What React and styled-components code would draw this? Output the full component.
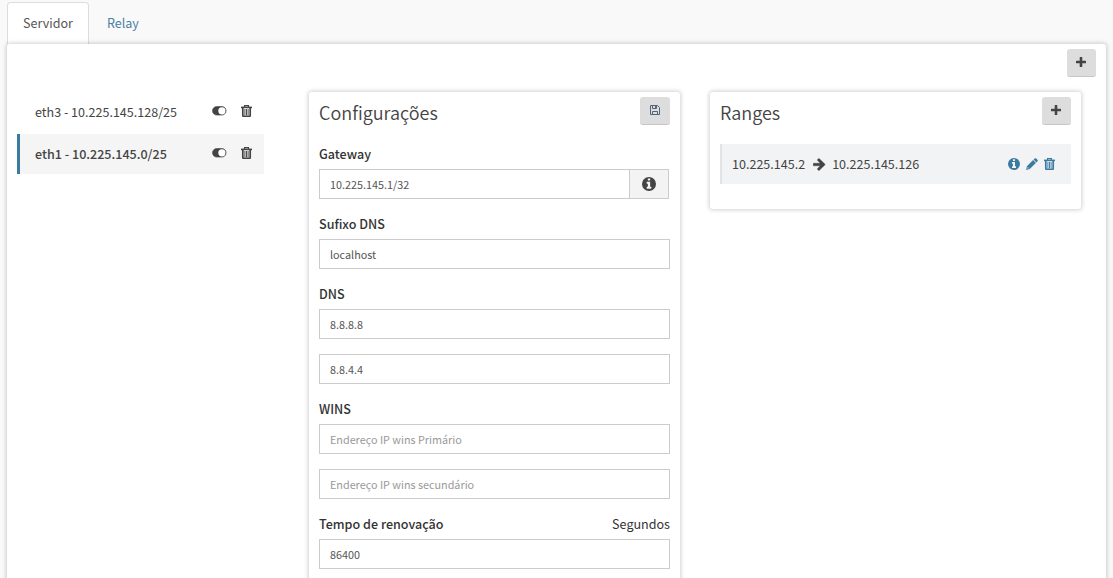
import React from "react";
import styled, { createGlobalStyle, css } from "styled-components";

const Global = createGlobalStyle`
  * { box-sizing: border-box; }
  body {
    margin: 0;
    background: #f9f9f9;
    color: #444;
    font: 12.55px/20px "Noto Sans CJK JP", "Noto Sans", sans-serif;
    height: 578px;
    overflow: hidden;
  }
`;

const Page = styled.main`
  height: 578px;
  padding: 2px 7px 0 7px;
  display: flex;
  flex-direction: column;
  overflow: hidden;
`;

const Tabs = styled.nav`
  display: flex;
  height: 42px;
  flex: none;
`;

const Tab = styled.a`
  height: 42px;
  padding: 10px 15px 0;
  border: 1px solid ${(p) => (p.$active ? "#ddd" : "transparent")};
  border-bottom: 0;
  border-radius: 4px 4px 0 0;
  background: ${(p) => (p.$active ? "#fff" : "transparent")};
  color: ${(p) => (p.$active ? "#555" : "#4a7ea3")};
  margin-right: 2px;
`;

const Panel = styled.section`
  background: #fff;
  border-radius: 3px;
  box-shadow: 0 0 4px 1px rgba(0, 0, 0, 0.18);
`;

const Content = styled(Panel)`
  height: 620px;
  flex: none;
  padding: 5px 10px 0;
`;

const TopBar = styled.div`
  display: flex;
  justify-content: flex-end;
  height: 43px;
`;

const Columns = styled.div`
  display: grid;
  grid-template-columns: 292px 371px 371px;
  align-items: start;
`;

const Button = styled.button`
  width: ${(p) => p.$width || 29}px;
  height: 28px;
  padding: 0 1px 1px 0;
  border: 0;
  border-bottom: 1px solid #c6c6c6;
  border-radius: 3px;
  background: #ddd;
  color: #444;
  display: flex;
  align-items: center;
  justify-content: center;
`;

const InterfaceList = styled.ul`
  list-style: none;
  margin: 0;
  padding: 0;
  width: 247px;
`;

const InterfaceRow = styled.li`
  display: flex;
  align-items: center;
  height: 40px;
  margin-bottom: 2px;
  padding: 0 12px 0 15px;
  border-left: 3px solid transparent;
  ${(p) =>
    p.$active &&
    css`
      background: #f5f5f5;
      border-color: #3c7ba0;
      font-weight: 500;
    `}
`;

const RowIcons = styled.span`
  display: flex;
  align-items: center;
  gap: ${(p) => p.$gap}px;
  margin-left: auto;
  padding-bottom: ${(p) => p.$lift || 0}px;
  color: ${(p) => p.$color};
  svg { display: block; }
`;

const Card = styled(Panel)`
  padding: 5px 10px 0;
  height: ${(p) => p.$height}px;
  & + & { margin-left: 30px; margin-right: -30px; }
`;

const CardHeader = styled.header`
  display: flex;
  justify-content: space-between;
  height: 47px;
`;

const Title = styled.h3`
  margin: 2px 0 0;
  font-size: 18px;
  line-height: 26px;
  font-weight: 350;
`;

const Label = styled.label`
  display: flex;
  justify-content: space-between;
  height: 25px;
  color: #333;
  font-weight: 500;
`;

const Unit = styled.span`
  font-weight: 400;
`;

const Field = styled.div`
  display: flex;
  height: 30px;
  margin: 0 ${(p) => (p.$grouped ? 1 : 0)}px 15px 0;
  border: 1px solid #ccc;
`;

const Input = styled.input`
  flex: 1;
  min-width: 0;
  border: 0;
  outline: 0;
  padding: 0 10px;
  background: #fff;
  color: #555;
  font: 10.8px "Noto Sans CJK JP", "Noto Sans", sans-serif;
  &::placeholder { color: #999; opacity: 1; }
`;

const Addon = styled.span`
  width: 39px;
  border-left: 1px solid #ccc;
  background: #f3f3f3;
  display: flex;
  align-items: center;
  justify-content: center;
`;

const RangeRow = styled.div`
  display: flex;
  align-items: center;
  height: 40px;
  padding: 0 16px 0 10px;
  border-left: 2px solid #e4e4e4;
  background: #f2f3f5;
`;

const ArrowIcon = styled.svg`
  margin: 0 6px 0 8px;
`;

const Plus = () => (
  <svg width="10" height="10" viewBox="0 0 10 10" fill="currentColor">
    <path d="M3.7.5q0-.5.5-.5h1.6q.5 0 .5.5v3.2h3.2q.5 0 .5.5v1.6q0 .5-.5.5H6.3v3.2q0 .5-.5.5H4.2q-.5 0-.5-.5V6.3H.5Q0 6.3 0 5.8V4.2q0-.5.5-.5h3.2z" />
  </svg>
);

const Info = ({ size }) => (
  <svg width={size} height={size} viewBox="0 0 1536 1536" fill="currentColor">
    <path fillRule="evenodd" d="M1024 1248v-160q0-14-9-23t-23-9h-96V544q0-14-9-23t-23-9H544q-14 0-23 9t-9 23v160q0 14 9 23t23 9h96v320h-96q-14 0-23 9t-9 23v160q0 14 9 23t23 9h448q14 0 23-9t9-23zM896 352V192q0-14-9-23t-23-9H672q-14 0-23 9t-9 23v160q0 14 9 23t23 9h192q14 0 23-9t9-23zM1536 768a768 768 0 1 1-1536 0a768 768 0 1 1 1536 0z" />
  </svg>
);

const Arrow = () => (
  <ArrowIcon width="13" height="13" viewBox="0 0 13 13" fill="currentColor" stroke="currentColor" strokeWidth="0.4">
    <path d="M.6 5.2h6.6L4.6 2.6q-.5-.6 0-1.1l.7-.7q.6-.5 1.1 0l5.4 5.1q.5.6 0 1.1l-5.4 5.2q-.5.5-1.1 0l-.7-.7q-.5-.6 0-1.1l2.6-2.6H.6Q.2 7.8.2 7.3V5.7q0-.5.4-.5z" />
  </ArrowIcon>
);

const Toggle = () => (
  <svg width="15" height="10" viewBox="0 0 15 10">
    <rect x="0.5" y="0.5" width="13.6" height="8.6" rx="4.3" fill="currentColor" stroke="currentColor" strokeWidth="0.6" />
    <circle cx="9.9" cy="4.8" r="3.6" fill="#fff" />
  </svg>
);

const Trash = () => (
  <svg width="11" height="12" viewBox="0 0 11 12" fill="none" stroke="currentColor">
    <path d="M0 2.4h11" strokeWidth="1.6" />
    <path d="M3.5 2.2V.6h4v1.6" strokeWidth="1.1" />
    <path d="M1.8 3v7.6q0 .7.8.7h5.8q.8 0 .8-.7V3" strokeWidth="1.7" />
    <path d="M3.9 4v6.4M5.5 4v6.4M7.1 4v6.4" strokeWidth="0.95" />
  </svg>
);

const Pencil = () => (
  <svg width="12" height="12" viewBox="0 0 12 12" fill="currentColor">
    <path d="M8.6.6q.8-.8 1.6 0l1.2 1.2q.8.8 0 1.6l-1 1-2.8-2.8zM7.1 2.1l2.8 2.8-6.2 6.2-3.6.8.8-3.6zM1.7 9l-.4 1.6 1.6-.4z" fillRule="evenodd" />
  </svg>
);

const Save = () => (
  <svg width="12" height="12" viewBox="0 0 12 12" fill="none" stroke="#526578">
    <path d="M1.5 1.5h7l2 2v7h-9z" />
    <path d="M3.5 10.5v-3h5v3" />
    <path d="M3.5 1.5v3h4v-3" />
    <path d="M6 2h1.5v2H6z" fill="#526578" stroke="none" />
  </svg>
);

const interfaces = [
  { name: "eth3 - 10.225.145.128/25" },
  { name: "eth1 - 10.225.145.0/25", active: true },
];

export default function App() {
  return (
    <Page>
      <Global />
      <Tabs>
        <Tab $active>Servidor</Tab>
        <Tab>Relay</Tab>
      </Tabs>
      <Content>
        <TopBar>
          <Button><Plus /></Button>
        </TopBar>
        <Columns>
          <InterfaceList>
            {interfaces.map((item) => (
              <InterfaceRow key={item.name} $active={item.active}>
                {item.name}
                <RowIcons $gap={14} $lift={2} $color="#444"><Toggle /><Trash /></RowIcons>
              </InterfaceRow>
            ))}
          </InterfaceList>
          <Card $height={560}>
            <CardHeader>
              <Title>Configurações</Title>
              <Button $width={30}><Save /></Button>
            </CardHeader>
            <Label>Gateway</Label>
            <Field $grouped>
              <Input defaultValue="10.225.145.1/32" />
              <Addon><Info size={14} /></Addon>
            </Field>
            <Label>Sufixo DNS</Label>
            <Field><Input defaultValue="localhost" /></Field>
            <Label>DNS</Label>
            <Field><Input defaultValue="8.8.8.8" /></Field>
            <Field><Input defaultValue="8.8.4.4" /></Field>
            <Label>WINS</Label>
            <Field><Input placeholder="Endereço IP wins Primário" /></Field>
            <Field><Input placeholder="Endereço IP wins secundário" /></Field>
            <Label>Tempo de renovação<Unit>Segundos</Unit></Label>
            <Field><Input defaultValue="86400" /></Field>
          </Card>
          <Card $height={117}>
            <CardHeader>
              <Title>Ranges</Title>
              <Button><Plus /></Button>
            </CardHeader>
            <RangeRow>
              10.225.145.2<Arrow />10.225.145.126
              <RowIcons $gap={6} $color="#3c7ba0"><Info size={12} /><Pencil /><Trash /></RowIcons>
            </RangeRow>
          </Card>
        </Columns>
      </Content>
    </Page>
  );
}
